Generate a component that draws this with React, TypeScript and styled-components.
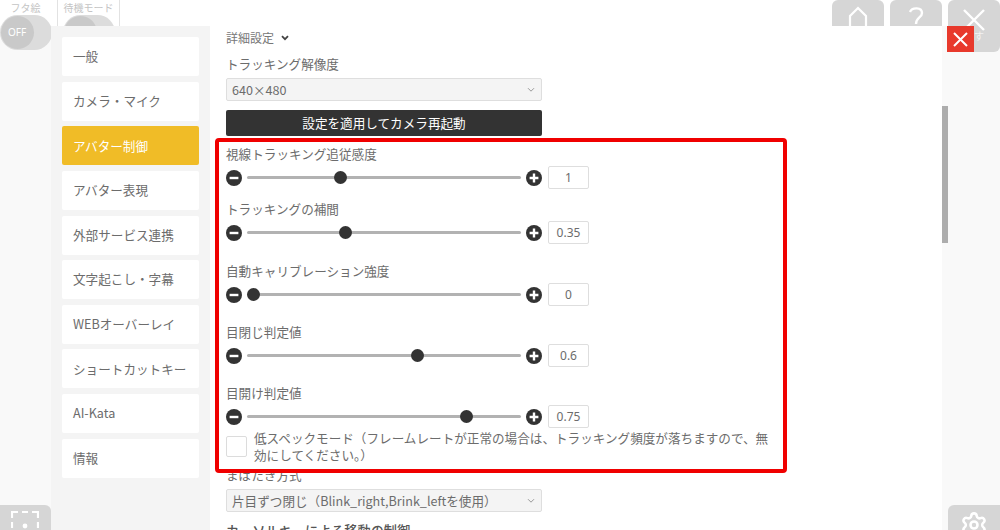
import React from "react"
import styled, { createGlobalStyle } from "styled-components"
import { Settings } from "lucide-react"

const GlobalStyle = createGlobalStyle`
  html, body {
    margin: 0;
    padding: 0;
    background: #f9f9f9;
  }
  * {
    box-sizing: border-box;
  }
`

const SPage = styled.div`
  position: relative;
  width: 1000px;
  height: 530px;
  overflow: hidden;
  display: flex;
  flex-direction: column;
  background: #f9f9f9;
  font-family: "Noto Sans CJK JP", "Noto Sans", sans-serif;
  font-size: 12.6px;
  color: #6c6c6c;
`

const STopBar = styled.div`
  position: relative;
  z-index: 1;
  height: 26px;
  flex: none;
  display: flex;
  background: #fff;
`

const SToolGroup = styled.div<{ $width: number; $trim?: number }>`
  width: ${({ $width }) => $width}px;
  height: 52px;
  flex: none;
  display: flex;
  flex-direction: column;
  align-items: center;
  padding-right: ${({ $trim }) => $trim ?? 0}px;
  border-right: 1px solid #e2e2e2;
`

const SToolLabel = styled.div`
  font-size: 10px;
  line-height: 14px;
  color: #c4c4c4;
  white-space: nowrap;
  padding-top: 1px;
  height: 15px;
`

const SToggle = styled.div`
  width: 52px;
  height: 35px;
  border-radius: 18px;
  background: #dcdcdc;
  flex: none;
`

const SToggleKnob = styled.div`
  width: 33px;
  height: 33px;
  margin: 1px;
  border-radius: 50%;
  background: #c9c9c9;
  color: #fff;
  font-size: 10px;
  line-height: 33px;
  text-align: center;
  font-family: "Noto Sans", sans-serif;
`

const SSpacer = styled.div`
  flex: 1;
`

const SCornerButton = styled.div<{ $gap: number }>`
  position: relative;
  width: 52px;
  height: 52px;
  flex: none;
  margin-left: ${({ $gap }) => $gap}px;
  border-radius: 6px;
  background: #d6d6d6;
  display: flex;
  flex-direction: column;
  align-items: center;
  color: #fff;
`

const SCornerHint = styled.div`
  font-size: 10px;
  line-height: 11px;
  color: #f2f2f2;
  margin-top: -3px;
`

const SBody = styled.div`
  position: relative;
  flex: 1;
  min-height: 0;
  display: flex;
`

const SRail = styled.div<{ $width: number }>`
  width: ${({ $width }) => $width}px;
  flex: none;
  display: flex;
  flex-direction: column;
  justify-content: flex-end;
`

const SRailButton = styled.div<{ $radius: string }>`
  width: 52px;
  height: 25px;
  overflow: hidden;
  background: #d6d6d6;
  border-radius: ${({ $radius }) => $radius};
  display: flex;
  justify-content: center;
  color: #fff;
  padding-top: 6px;
  align-self: flex-end;
  flex: none;
`

const SModal = styled.div`
  position: relative;
  z-index: 2;
  width: 891px;
  flex: none;
  display: flex;
  background: #fff;
`

const SSidebar = styled.nav`
  width: 159px;
  flex: none;
  background: #f4f4f4;
  padding: 11px 11px 0;
  display: flex;
  flex-direction: column;
  gap: 5.65px;
`

const SMenuItem = styled.div<{ $active?: boolean }>`
  height: 39px;
  flex: none;
  padding: 0 0 1.5px 11px;
  display: flex;
  align-items: center;
  border-radius: 2px;
  background: ${({ $active }) => ($active ? "#f0bc27" : "#fff")};
  color: ${({ $active }) => ($active ? "#fff" : "#6c6c6c")};
`

const SContent = styled.main`
  flex: 1;
  min-width: 0;
  overflow: hidden;
  padding: 2px 0 0 16px;
`

const SDetailHead = styled.div`
  height: 19px;
  display: flex;
  align-items: center;
  gap: 7px;
  font-size: 12px;
  color: #777;
`

const SFieldLabel = styled.div<{ $top?: number }>`
  margin-top: ${({ $top }) => $top ?? 0}px;
  line-height: 20px;
  height: 20px;
  white-space: nowrap;
`

const SSelect = styled.div`
  width: 316px;
  height: 23px;
  margin-top: 4px;
  padding: 0 6px 0 5px;
  display: flex;
  align-items: center;
  justify-content: space-between;
  background: #f4f4f4;
  border: 1px solid #dedede;
  border-radius: 2px;
  white-space: nowrap;
`

const SApplyButton = styled.div`
  width: 316px;
  height: 26px;
  margin-top: 9px;
  padding-bottom: 2px;
  display: flex;
  align-items: center;
  justify-content: center;
  background: #333;
  border-radius: 2px;
  color: #fff;
`

const SSliderRow = styled.div`
  height: 23px;
  margin-top: 2px;
  display: flex;
  align-items: center;
`

const SRoundButton = styled.svg`
  width: 16px;
  height: 16px;
  flex: none;
  display: block;
`

const STrack = styled.div`
  position: relative;
  width: 274px;
  height: 3px;
  margin: 0 5px;
  flex: none;
  background: #b2b2b2;
  border-radius: 2px;
`

const SKnob = styled.div`
  position: absolute;
  top: -5px;
  width: 13px;
  height: 13px;
  margin-left: -6.5px;
  border-radius: 50%;
  background: #333;
`

const SValueBox = styled.div`
  width: 41px;
  height: 23px;
  margin-left: 6px;
  flex: none;
  border: 1px solid #dedede;
  border-radius: 2px;
  background: #fff;
  text-align: center;
  line-height: 22px;
  font-size: 12px;
  font-family: "Noto Sans", sans-serif;
`

const SCheckRow = styled.div`
  display: flex;
  align-items: center;
  gap: 7px;
  margin-top: 1px;
`

const SCheckBox = styled.div`
  width: 21px;
  height: 21px;
  flex: none;
  border: 1px solid #dcdcdc;
  border-radius: 2px;
  background: #fff;
`

const SCheckText = styled.div`
  line-height: 17px;
  width: 525px;
`

const SSectionTitle = styled.div`
  margin-top: 10px;
  font-size: 13.2px;
  line-height: 18px;
  font-weight: 500;
  white-space: nowrap;
  color: #555;
`

const SHighlight = styled.div`
  position: absolute;
  left: 215px;
  top: 138px;
  width: 572px;
  height: 335px;
  z-index: 3;
  border: 4px solid #f00000;
  border-radius: 4px;
  pointer-events: none;
`

const SCloseButton = styled.div`
  position: absolute;
  left: 947px;
  top: 26px;
  width: 27px;
  height: 26px;
  z-index: 3;
  display: flex;
  align-items: center;
  justify-content: center;
  background: #e8392c;
`

const SScrollbar = styled.div`
  position: absolute;
  left: 942px;
  top: 106px;
  width: 6px;
  height: 137px;
  z-index: 2;
  background: #adadad;
`

const SChevron = styled.svg`
  flex: none;
  display: block;
`

const SCornerIcon = styled.svg<{ $top: number }>`
  flex: none;
  display: block;
  margin-top: ${({ $top }) => $top}px;
`

const Chevron = ({ bold }: { bold?: boolean }) => (
  <SChevron width="8" height="6" viewBox="0 0 8 6" fill="none" stroke={bold ? "#444" : "#999"} strokeWidth={bold ? 1.8 : 1}>
    <path d="M1 1.2 L4 4.2 L7 1.2" />
  </SChevron>
)

const RoundIcon = ({ plus }: { plus?: boolean }) => (
  <SRoundButton viewBox="0 0 16 16">
    <circle cx="8" cy="8" r="8" fill="#333" />
    <path d={plus ? "M3.6 8 H12.4 M8 3.6 V12.4" : "M3.6 8 H12.4"} stroke="#fff" strokeWidth="2.4" />
  </SRoundButton>
)

const menuItems = [
  "一般",
  "カメラ・マイク",
  "アバター制御",
  "アバター表現",
  "外部サービス連携",
  "文字起こし・字幕",
  "WEBオーバーレイ",
  "ショートカットキー",
  "AI-Kata",
  "情報",
]

// knob is the position on the track in px, top is the space above the label
const sliders = [
  { label: "視線トラッキング追従感度", value: "1", knob: 93, top: 8 },
  { label: "トラッキングの補間", value: "0.35", knob: 98, top: 10 },
  { label: "自動キャリブレーション強度", value: "0", knob: 6, top: 17 },
  { label: "目閉じ判定値", value: "0.6", knob: 170, top: 16 },
  { label: "目開け判定値", value: "0.75", knob: 219, top: 16 },
]

const App = () => {
  return (
    <SPage>
      <GlobalStyle />
      <STopBar>
        <SToolGroup $width={58} $trim={6}>
          <SToolLabel>フタ絵</SToolLabel>
          <SToggle>
            <SToggleKnob>OFF</SToggleKnob>
          </SToggle>
        </SToolGroup>
        <SToolGroup $width={62}>
          <SToolLabel>待機モード</SToolLabel>
          <SToggle>
            <SToggleKnob />
          </SToggle>
        </SToolGroup>
        <SSpacer />
        <SCornerButton $gap={0}>
          <SCornerIcon $top={6} width="22" height="24" viewBox="0 0 22 24" fill="none" stroke="#fff" strokeWidth="2.2">
            <path d="M3 24 V10 L11 2 L19 10 V24" />
          </SCornerIcon>
        </SCornerButton>
        <SCornerButton $gap={6}>
          <SCornerIcon $top={7} width="16" height="22" viewBox="0 0 16 22" fill="none" stroke="#fff" strokeWidth="2.4">
            <path d="M2 5 C4 0 14 0 14 6 C14 11 8 10 8 17" />
          </SCornerIcon>
        </SCornerButton>
        <SCornerButton $gap={6}>
          <SCornerIcon $top={9} width="22" height="24" viewBox="0 0 22 24" fill="none" stroke="#fff" strokeWidth="2.4">
            <path d="M1 1 L21 21 M21 1 L1 21" />
          </SCornerIcon>
          <SCornerHint>隠す</SCornerHint>
        </SCornerButton>
      </STopBar>
      <SBody>
        <SRail $width={51}>
          <SRailButton $radius="0 6px 0 0">
            <svg width="28" height="28" viewBox="0 0 28 28" fill="none" stroke="#fff" strokeWidth="2.2">
              <path d="M1 7 V1 H7 M11 1 H17 M21 1 H27 V7 M1 11 V17 M27 11 V17" />
              <circle cx="14" cy="15" r="2.4" fill="#fff" stroke="none" />
            </svg>
          </SRailButton>
        </SRail>
        <SModal>
          <SSidebar>
            {menuItems.map((item) => (
              <SMenuItem key={item} $active={item === "アバター制御"}>{item}</SMenuItem>
            ))}
          </SSidebar>
          <SContent>
            <SDetailHead>詳細設定 <Chevron bold /></SDetailHead>
            <SFieldLabel $top={7}>トラッキング解像度</SFieldLabel>
            <SSelect>640×480 <Chevron /></SSelect>
            <SApplyButton>設定を適用してカメラ再起動</SApplyButton>
            {sliders.map((s) => (
              <div key={s.label}>
                <SFieldLabel $top={s.top}>{s.label}</SFieldLabel>
                <SSliderRow>
                  <RoundIcon />
                  <STrack>
                    <SKnob style={{ left: s.knob }} />
                  </STrack>
                  <RoundIcon plus />
                  <SValueBox>{s.value}</SValueBox>
                </SSliderRow>
              </div>
            ))}
            <SCheckRow>
              <SCheckBox />
              <SCheckText>低スペックモード（フレームレートが正常の場合は、トラッキング頻度が落ちますので、無効にしてください。）</SCheckText>
            </SCheckRow>
            <SFieldLabel $top={2}>まばたき方式</SFieldLabel>
            <SSelect>片目ずつ閉じ（Blink_right,Brink_leftを使用） <Chevron /></SSelect>
            <SSectionTitle>カーソルキーによる移動の制御</SSectionTitle>
          </SContent>
        </SModal>
        <SRail $width={58}>
          <SRailButton $radius="6px 0 0 0">
            <Settings size={28} strokeWidth={2.2} />
          </SRailButton>
        </SRail>
      </SBody>
      <SScrollbar />
      <SCloseButton>
        <svg width="17" height="17" viewBox="0 0 17 17" stroke="#fff" strokeWidth="2">
          <path d="M2 2 L15 15 M15 2 L2 15" />
        </svg>
      </SCloseButton>
      <SHighlight />
    </SPage>
  )
}

export default App
